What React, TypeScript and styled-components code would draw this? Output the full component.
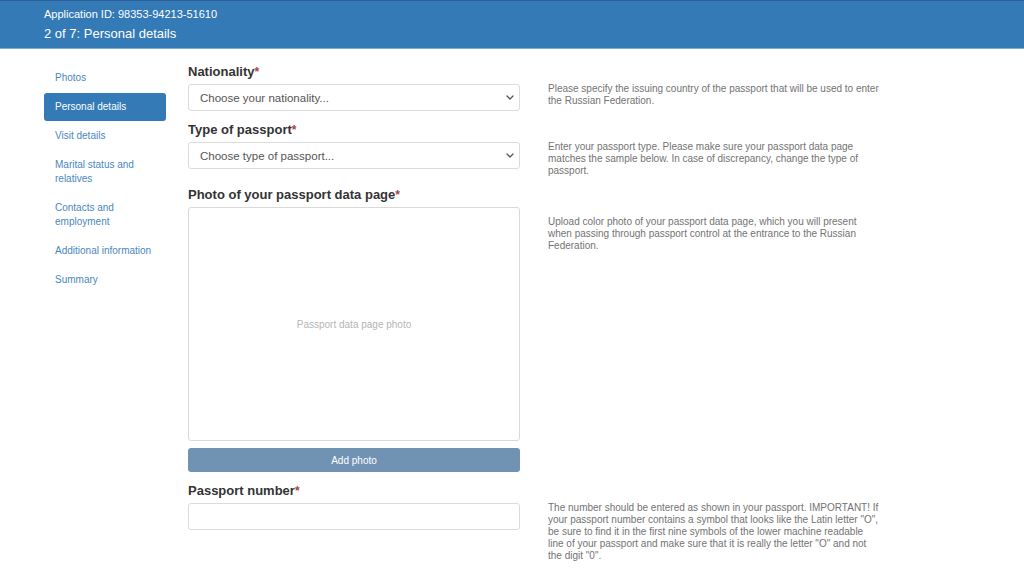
import React from "react";
import styled, { createGlobalStyle } from "styled-components";

const Global = createGlobalStyle`
  html, body { margin: 0; padding: 0; background: #fff; }
  body { font-family: "Liberation Sans", Arial, sans-serif; color: #333; }
  * { box-sizing: border-box; }
`;

const Header = styled.header`
  height: 49px;
  background: #337ab7;
  border-top: 1px solid #2a5f9c;
  border-bottom: 1px solid #7fa9d3;
  padding: 5px 44px 0;
  color: #fff;
`;

const AppId = styled.div`
  font-size: 11px;
  line-height: 16px;
`;

const Step = styled.div`
  font-size: 13px;
  line-height: 20px;
  margin-top: 2px;
`;

const Body = styled.div`
  display: flex;
  align-items: flex-start;
  padding: 14px 0 0 44px;
  gap: 22px;
`;

const Nav = styled.nav`
  width: 122px;
  padding-top: 1px;
  display: flex;
  flex-direction: column;
  gap: 1px;
`;

const NavItem = styled.a<{ $active?: boolean }>`
  display: block;
  padding: 7px 11px;
  font-size: 10px;
  line-height: 14px;
  border-radius: 3px;
  text-decoration: none;
  color: ${(p) => (p.$active ? "#fff" : "#4a87c0")};
  background: ${(p) => (p.$active ? "#337ab7" : "transparent")};
`;

const Form = styled.div`
  display: flex;
  flex-direction: column;
`;

const Row = styled.div<{ $top?: number }>`
  display: grid;
  grid-template-columns: 332px 332px;
  column-gap: 28px;
  align-items: start;
  margin-top: ${(p) => p.$top ?? 0}px;
`;

const Field = styled.div`
  display: flex;
  flex-direction: column;
`;

const Label = styled.label`
  display: block;
  height: 17px;
  font-size: 13px;
  font-weight: bold;
  line-height: 17px;
  margin-bottom: 4px;
  color: #333;
`;

const Req = styled.span`
  color: #a94442;
  font-size: 12px;
  line-height: 0;
`;

const Select = styled.div`
  height: 27px;
  border: 1px solid #dcdcdc;
  border-radius: 3px;
  display: flex;
  align-items: center;
  justify-content: space-between;
  padding: 0 5px 0 11px;
  font-size: 11.5px;
  color: #555;
`;

const TextInput = styled.div`
  height: 27px;
  border: 1px solid #dcdcdc;
  border-radius: 3px;
`;

const PhotoBox = styled.div`
  height: 234px;
  border: 1px solid #d9d9d9;
  border-radius: 3px;
  display: flex;
  align-items: center;
  justify-content: center;
  font-size: 10px;
  color: #b5b5b5;
`;

const AddButton = styled.button`
  margin-top: 7px;
  height: 24px;
  border: none;
  border-radius: 3px;
  background: #7193b3;
  color: #fff;
  font-family: "Liberation Sans", Arial, sans-serif;
  font-size: 10px;
`;

const Help = styled.p<{ $top: number }>`
  margin: ${(p) => p.$top}px 0 0;
  font-size: 10px;
  line-height: 12px;
  color: #737373;
`;

const Chevron = () => (
  <svg width="8" height="5" viewBox="0 0 8 5" fill="none">
    <path d="M1 1l3 3 3-3" stroke="#555" strokeWidth="1.3" strokeLinecap="round" strokeLinejoin="round" />
  </svg>
);

const navItems = [
  "Photos",
  "Personal details",
  "Visit details",
  "Marital status and relatives",
  "Contacts and employment",
  "Additional information",
  "Summary",
];

export default function App() {
  return (
    <>
      <Global />
      <Header>
        <AppId>Application ID: 98353-94213-51610</AppId>
        <Step>2 of 7: Personal details</Step>
      </Header>
      <Body>
        <Nav>
          {navItems.map((n) => (
            <NavItem key={n} $active={n === "Personal details"}>
              {n}
            </NavItem>
          ))}
        </Nav>
        <Form>
          <Row>
            <Field>
              <Label>
                Nationality<Req>*</Req>
              </Label>
              <Select>
                Choose your nationality...
                <Chevron />
              </Select>
            </Field>
            <Help $top={20}>
              Please specify the issuing country of the passport that will be used to enter the Russian Federation.
            </Help>
          </Row>
          <Row $top={10}>
            <Field>
              <Label>
                Type of passport<Req>*</Req>
              </Label>
              <Select>
                Choose type of passport...
                <Chevron />
              </Select>
            </Field>
            <Help $top={20}>
              Enter your passport type. Please make sure your passport data page matches the sample below. In case of
              discrepancy, change the type of passport.
            </Help>
          </Row>
          <Row $top={9}>
            <Field>
              <Label>
                Photo of your passport data page<Req>*</Req>
              </Label>
              <PhotoBox>Passport data page photo</PhotoBox>
              <AddButton>Add photo</AddButton>
            </Field>
            <Help $top={30}>
              Upload color photo of your passport data page, which you will present when passing through passport
              control at the entrance to the Russian Federation.
            </Help>
          </Row>
          <Row $top={10}>
            <Field>
              <Label>
                Passport number<Req>*</Req>
              </Label>
              <TextInput />
            </Field>
            <Help $top={20}>
              The number should be entered as shown in your passport. IMPORTANT! If your passport number contains a
              symbol that looks like the Latin letter "O", be sure to find it in the first nine symbols of the lower
              machine readable line of your passport and make sure that it is really the letter "O" and not the digit
              "0".
            </Help>
          </Row>
        </Form>
      </Body>
    </>
  );
}
